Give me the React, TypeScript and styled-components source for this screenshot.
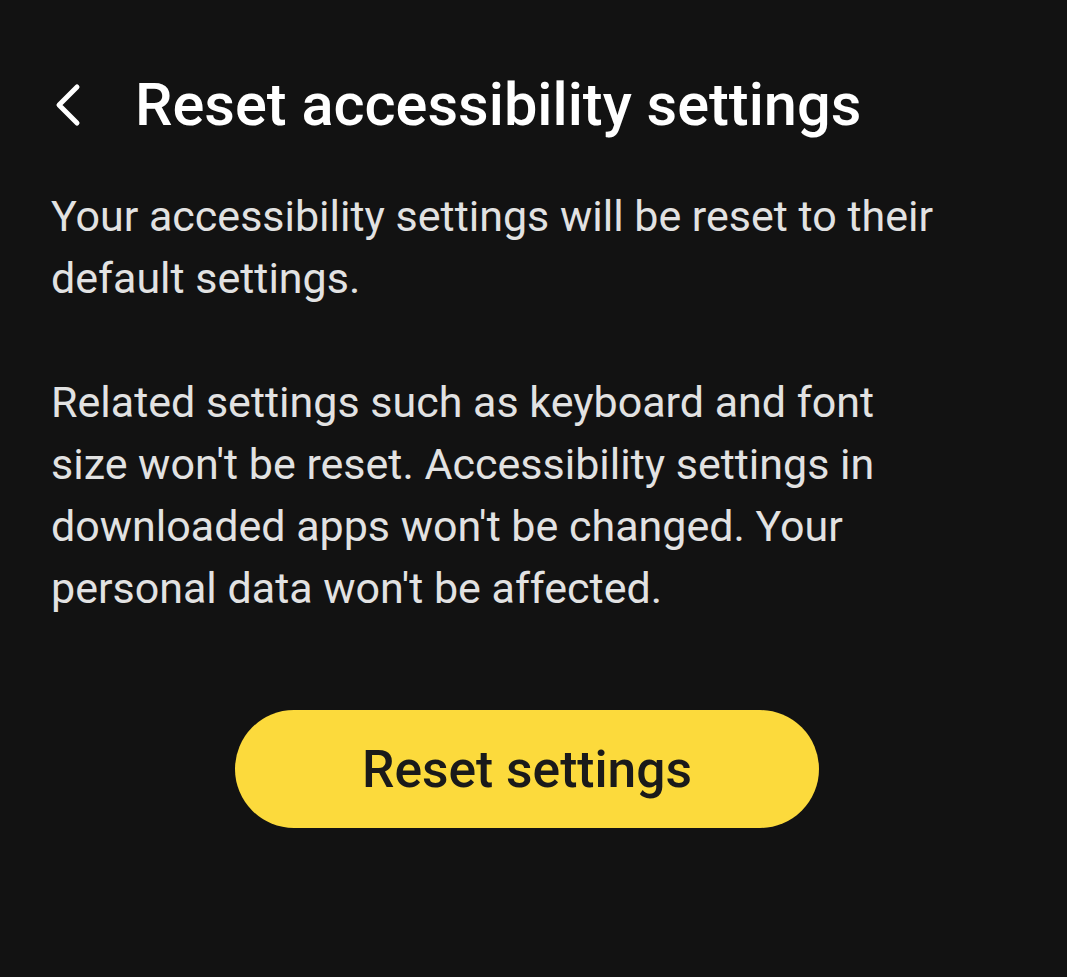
import React from "react";
import styled, { createGlobalStyle } from "styled-components";

const Global = createGlobalStyle`
  html, body { margin: 0; padding: 0; background: #121212; }
  body { font-family: Roboto, "Noto Sans", sans-serif; }
`;

const Page = styled.div`
  width: 1067px;
  height: 977px;
  background: #121212;
  box-sizing: border-box;
  padding: 70px 51px 0 51px;
  display: flex;
  flex-direction: column;
`;

const Header = styled.div`
  display: flex;
  align-items: center;
  gap: 50px;
  height: 70px;
`;

const BackButton = styled.button`
  background: none;
  border: none;
  padding: 0;
  width: 34px;
  height: 44px;
  display: flex;
  align-items: center;
  justify-content: center;
  color: #ffffff;
`;

const Title = styled.h1`
  margin: 0;
  font-size: 59.5px;
  font-weight: 500;
  color: #ffffff;
  letter-spacing: 0;
  white-space: nowrap;
`;

const Body = styled.div`
  margin-top: 45px;
  color: #e2e2e2;
  font-size: 43px;
  line-height: 62px;
  white-space: nowrap;
`;

const Para = styled.p`
  margin: 0 0 62px 0;
`;

const ButtonRow = styled.div`
  display: flex;
  justify-content: center;
  margin-top: 29px;
  padding-right: 13px;
`;

const ResetButton = styled.button`
  width: 584px;
  height: 118px;
  border: none;
  border-radius: 59px;
  background: #fcda3c;
  color: #1a1a1a;
  font-family: Roboto, "Noto Sans", sans-serif;
  font-size: 51.5px;
  font-weight: 500;
`;

export default function App() {
  return (
    <>
      <Global />
      <Page>
        <Header>
          <BackButton aria-label="Back">
            <svg width="32" height="44" viewBox="0 0 32 44" fill="none">
              <path d="M25 4 L7 22 L25 40" stroke="#fff" strokeWidth="5" strokeLinecap="round" strokeLinejoin="round" />
            </svg>
          </BackButton>
          <Title>Reset accessibility settings</Title>
        </Header>
        <Body>
          <Para>
            Your accessibility settings will be reset to their
            <br />
            default settings.
          </Para>
          <Para>
            Related settings such as keyboard and font
            <br />
            size won't be reset. Accessibility settings in
            <br />
            downloaded apps won't be changed. Your
            <br />
            personal data won't be affected.
          </Para>
        </Body>
        <ButtonRow>
          <ResetButton>Reset settings</ResetButton>
        </ButtonRow>
      </Page>
    </>
  );
}
